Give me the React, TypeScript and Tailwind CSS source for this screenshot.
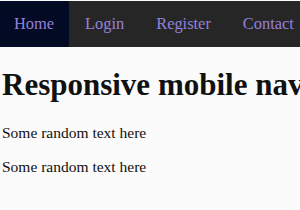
import React from 'react';

const links = ['Home', 'Login', 'Register', 'Contact'];

const App: React.FC = () => {
  return (
    <div
      className="min-h-[210px] w-[300px] overflow-hidden bg-[#fbfbfb] text-[#111] pt-px"
      style={{ fontFamily: '"Liberation Serif", "Times New Roman", serif' }}
    >
      <nav className="flex h-[46px] bg-[#262626] whitespace-nowrap">
        {links.map((name, i) => (
          <a
            key={name}
            className={`flex items-center text-[16.4px] text-[#9580dc] ${i === 0 ? 'bg-[#020a24] pl-[14px] pr-[15px]' : 'px-4'}`}
          >
            {name}
          </a>
        ))}
      </nav>
      <div className="pl-[2px]">
        <h1 className="mt-[20px] whitespace-nowrap text-[31px] font-bold leading-[36px]">
          Responsive mobile navbar
        </h1>
        <p className="mt-[21px] text-[15.5px] leading-[18px]">Some random text here</p>
        <p className="mt-[16px] text-[15.5px] leading-[18px]">Some random text here</p>
      </div>
    </div>
  );
};

export default App;
